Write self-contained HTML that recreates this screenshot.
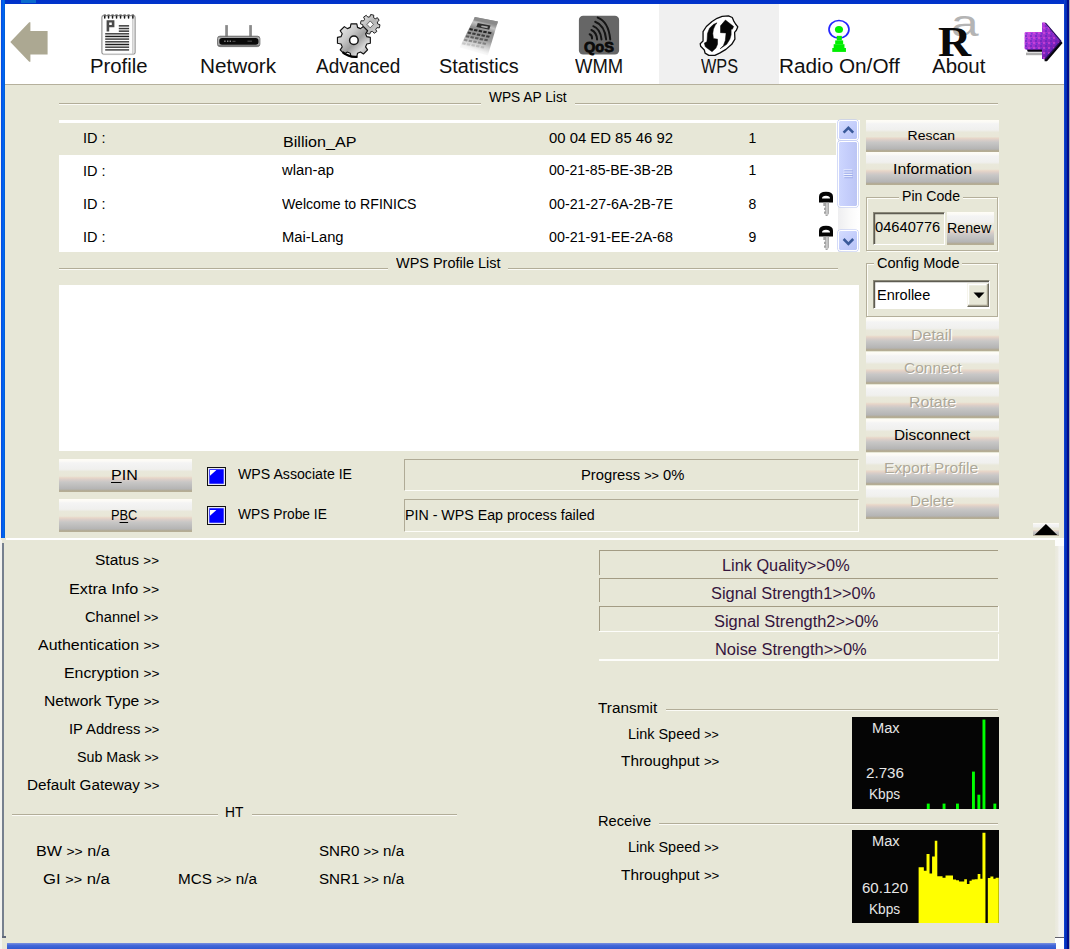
<!DOCTYPE html>
<html lang="en"><head><meta charset="utf-8"><title>WPS</title><style>
html,body{margin:0;padding:0}
body{width:1070px;height:949px;position:relative;overflow:hidden;background:#e7e7d7;font-family:"Liberation Sans",Arial,sans-serif;}
#r>div,#r>svg,.t{position:absolute}
.t{white-space:pre;color:#000;transform-origin:0 50%}
.g{font-size:.86em}
u{text-decoration-thickness:1px;text-underline-offset:1.5px}
</style></head>
<body><div id="r">
<div style="left:5px;top:4px;width:1059px;height:79.5px;background:#fff;"></div>
<div style="left:659px;top:4px;width:120px;height:79.5px;background:#f0f0f0;"></div>
<div style="left:5px;top:83.5px;width:1059px;height:1.2px;background:#b5b09c;"></div>
<div style="left:0px;top:0px;width:1070px;height:4px;background:linear-gradient(#0030c8,#0034cc);"></div>
<div style="left:21px;top:0px;width:15px;height:2.5px;background:#0a6acc;"></div>
<div style="left:0px;top:0px;width:1px;height:949px;background:#f4f4f0;"></div>
<div style="left:1px;top:0px;width:4.3px;height:538px;background:linear-gradient(90deg,#0848dc,#0060ee 45%,#0066f0 62%,#005cd0);"></div>
<div style="left:1063.7px;top:0px;width:3px;height:949px;background:linear-gradient(90deg,#1848d0,#0434c4 40%,#0230b0);"></div>
<div style="left:1066.5px;top:0px;width:2.2px;height:949px;background:#020c8c;"></div>
<div style="left:1068.6px;top:0px;width:1.4px;height:949px;background:#a6a6aa;"></div>
<div style="left:6px;top:538px;width:1058px;height:1.6px;background:#fff;"></div>
<div style="left:1055px;top:540px;width:8.7px;height:404px;background:linear-gradient(90deg,#e9e9dc,#ecebe2 30%,#f3f3f1 45%,#f2f2f2);"></div>
<div style="left:1055px;top:539px;width:8.7px;height:7px;background:#fdfdfc;"></div>
<div style="left:1055px;top:936.6px;width:8.6px;height:1.2px;background:#60606a;"></div>
<div style="left:1055px;top:937.8px;width:8.6px;height:11.2px;background:#fff;"></div>
<div style="left:0px;top:539.6px;width:2.3px;height:410px;background:#f3f3ef;"></div>
<div style="left:2.3px;top:543px;width:1.7px;height:394px;background:#76808e;"></div>
<div style="left:2.3px;top:936.4px;width:4px;height:1.3px;background:#60687a;"></div>
<div style="left:6.5px;top:943.4px;width:1049px;height:5.6px;background:linear-gradient(#7a90e0,#4468d8 40%,#3058d0);"></div>
<div style="left:58.5px;top:102.8px;width:422.5px;height:1.1px;background:#b2ad98;"></div>
<div style="left:58.5px;top:103.9px;width:422.5px;height:1px;background:#fbfbf6;"></div>
<div style="left:575px;top:102.8px;width:423px;height:1.1px;background:#b2ad98;"></div>
<div style="left:575px;top:103.9px;width:423px;height:1px;background:#fbfbf6;"></div>
<div style="left:58.5px;top:267.6px;width:329.5px;height:1.1px;background:#b2ad98;"></div>
<div style="left:58.5px;top:268.7px;width:329.5px;height:1px;background:#fbfbf6;"></div>
<div style="left:508px;top:267.6px;width:330px;height:1.1px;background:#b2ad98;"></div>
<div style="left:508px;top:268.7px;width:330px;height:1px;background:#fbfbf6;"></div>
<div style="left:12px;top:813.6px;width:206.3px;height:1.1px;background:#b2ad98;"></div>
<div style="left:12px;top:814.7px;width:206.3px;height:1px;background:#fbfbf6;"></div>
<div style="left:252.3px;top:813.6px;width:205.2px;height:1.1px;background:#b2ad98;"></div>
<div style="left:252.3px;top:814.7px;width:205.2px;height:1px;background:#fbfbf6;"></div>
<div style="left:665.5px;top:709.3px;width:332.5px;height:1.1px;background:#b2ad98;"></div>
<div style="left:665.5px;top:710.4px;width:332.5px;height:1px;background:#fbfbf6;"></div>
<div style="left:659px;top:823.2px;width:339px;height:1.1px;background:#b2ad98;"></div>
<div style="left:659px;top:824.3px;width:339px;height:1px;background:#fbfbf6;"></div>
<div style="left:58.5px;top:119.8px;width:801px;height:132px;background:#fff;"></div>
<div style="left:58.5px;top:122.6px;width:777.5px;height:32px;background:#e7e7d7;"></div>
<div style="left:838px;top:120px;width:21px;height:131.8px;background:linear-gradient(90deg,#eeeef0,#fafafa 60%,#fff);"></div>
<div style="left:838.3px;top:120.3px;width:20px;height:19.8px;background:linear-gradient(135deg,#d4dcff,#c2ccfb 60%,#b8c4f6);border:1px solid #fff;border-radius:2.5px;box-sizing:border-box;box-shadow:0 0 0 .6px #b8c4f4;"></div>
<div style="left:838.3px;top:141.4px;width:20px;height:65.2px;background:linear-gradient(90deg,#cdd6fe,#c4cdfb 50%,#bcc6f4);border:1px solid #fff;border-radius:2.5px;box-sizing:border-box;box-shadow:0 0 0 .6px #b8c4f4;"></div>
<div style="left:838.3px;top:230.4px;width:20px;height:21px;background:linear-gradient(135deg,#d4dcff,#c2ccfb 60%,#b8c4f6);border:1px solid #fff;border-radius:2.5px;box-sizing:border-box;box-shadow:0 0 0 .6px #b8c4f4;"></div>
<div style="left:58.5px;top:285px;width:800.5px;height:166.3px;background:#fff;"></div>
<div style="left:866px;top:120.1px;width:133px;height:32px;background:linear-gradient(#fffdf6 0%,#fbfaf6 7%,#f4f4f4 12%,#f0f0ee 31%,#e9e8da 38%,#e9e7d8 52%,#e8d6c8 57%,#d8cdc8 63%,#c8c7c6 70%,#b4b4b4 91%,#b2ab98 95%,#b6ae92 100%);"></div>
<div style="left:866px;top:152.3px;width:133px;height:32.7px;background:linear-gradient(#fffdf6 0%,#fbfaf6 7%,#f4f4f4 12%,#f0f0ee 31%,#e9e8da 38%,#e9e7d8 52%,#e8d6c8 57%,#d8cdc8 63%,#c8c7c6 70%,#b4b4b4 91%,#b2ab98 95%,#b6ae92 100%);"></div>
<div style="left:866px;top:318.2px;width:133px;height:32.6px;background:linear-gradient(#fffdf6 0%,#fbfaf6 7%,#f4f4f4 12%,#f0f0ee 31%,#e9e8da 38%,#e9e7d8 52%,#e8d6c8 57%,#d8cdc8 63%,#c8c7c6 70%,#b4b4b4 91%,#b2ab98 95%,#b6ae92 100%);"></div>
<div style="left:866px;top:351.78px;width:133px;height:32.6px;background:linear-gradient(#fffdf6 0%,#fbfaf6 7%,#f4f4f4 12%,#f0f0ee 31%,#e9e8da 38%,#e9e7d8 52%,#e8d6c8 57%,#d8cdc8 63%,#c8c7c6 70%,#b4b4b4 91%,#b2ab98 95%,#b6ae92 100%);"></div>
<div style="left:866px;top:385.36px;width:133px;height:32.6px;background:linear-gradient(#fffdf6 0%,#fbfaf6 7%,#f4f4f4 12%,#f0f0ee 31%,#e9e8da 38%,#e9e7d8 52%,#e8d6c8 57%,#d8cdc8 63%,#c8c7c6 70%,#b4b4b4 91%,#b2ab98 95%,#b6ae92 100%);"></div>
<div style="left:866px;top:418.94px;width:133px;height:32.6px;background:linear-gradient(#fffdf6 0%,#fbfaf6 7%,#f4f4f4 12%,#f0f0ee 31%,#e9e8da 38%,#e9e7d8 52%,#e8d6c8 57%,#d8cdc8 63%,#c8c7c6 70%,#b4b4b4 91%,#b2ab98 95%,#b6ae92 100%);"></div>
<div style="left:866px;top:452.52px;width:133px;height:32.6px;background:linear-gradient(#fffdf6 0%,#fbfaf6 7%,#f4f4f4 12%,#f0f0ee 31%,#e9e8da 38%,#e9e7d8 52%,#e8d6c8 57%,#d8cdc8 63%,#c8c7c6 70%,#b4b4b4 91%,#b2ab98 95%,#b6ae92 100%);"></div>
<div style="left:866px;top:486.1px;width:133px;height:32.6px;background:linear-gradient(#fffdf6 0%,#fbfaf6 7%,#f4f4f4 12%,#f0f0ee 31%,#e9e8da 38%,#e9e7d8 52%,#e8d6c8 57%,#d8cdc8 63%,#c8c7c6 70%,#b4b4b4 91%,#b2ab98 95%,#b6ae92 100%);"></div>
<div style="left:947px;top:212px;width:47px;height:33px;background:linear-gradient(#fffdf6 0%,#fbfaf6 7%,#f4f4f4 12%,#f0f0ee 31%,#e9e8da 38%,#e9e7d8 52%,#e8d6c8 57%,#d8cdc8 63%,#c8c7c6 70%,#b4b4b4 91%,#b2ab98 95%,#b6ae92 100%);"></div>
<div style="left:58.8px;top:458.8px;width:132.8px;height:32.8px;background:linear-gradient(#fffdf6 0%,#fbfaf6 7%,#f4f4f4 12%,#f0f0ee 31%,#e9e8da 38%,#e9e7d8 52%,#e8d6c8 57%,#d8cdc8 63%,#c8c7c6 70%,#b4b4b4 91%,#b2ab98 95%,#b6ae92 100%);"></div>
<div style="left:58.8px;top:499.3px;width:132.8px;height:32.6px;background:linear-gradient(#fffdf6 0%,#fbfaf6 7%,#f4f4f4 12%,#f0f0ee 31%,#e9e8da 38%,#e9e7d8 52%,#e8d6c8 57%,#d8cdc8 63%,#c8c7c6 70%,#b4b4b4 91%,#b2ab98 95%,#b6ae92 100%);"></div>
<div style="left:1032.7px;top:523.2px;width:26.3px;height:12.6px;background:linear-gradient(#fffdf6 0%,#fbfaf6 7%,#f4f4f4 12%,#f0f0ee 31%,#e9e8da 38%,#e9e7d8 52%,#e8d6c8 57%,#d8cdc8 63%,#c8c7c6 70%,#b4b4b4 91%,#b2ab98 95%,#b6ae92 100%);"></div>
<div style="left:866px;top:196.8px;width:132px;height:54px;border:1px solid #b4af9a;box-shadow:1px 1px 0 #fdfdf8, inset 1px 1px 0 #fdfdf8;box-sizing:border-box"></div>
<div style="left:899px;top:195.8px;width:64px;height:4px;background:#e7e7d7;"></div>
<div style="left:866px;top:263.2px;width:132px;height:53.4px;border:1px solid #b4af9a;box-shadow:1px 1px 0 #fdfdf8, inset 1px 1px 0 #fdfdf8;box-sizing:border-box"></div>
<div style="left:873.5px;top:262.2px;width:88.5px;height:4px;background:#e7e7d7;"></div>
<div style="left:872.7px;top:212.2px;width:72.6px;height:33px;background:#e7e7d7;box-sizing:border-box;border-style:solid;border-width:1.3px;border-color:#8a8878 #fff #fff #8a8878;box-shadow:inset 1.2px 1.2px 0 #5e5c52"></div>
<div style="left:873.2px;top:280.3px;width:117px;height:28.6px;background:#fff;box-sizing:border-box;border-style:solid;border-width:1.3px;border-color:#8a8878 #fff #fff #8a8878;box-shadow:inset 1.2px 1.2px 0 #5e5c52"></div>
<div style="left:967.2px;top:282.5px;width:21.6px;height:24.4px;background:#e7e7d7;box-sizing:border-box;border-style:solid;border-width:1.2px;border-color:#f6f5ec #6e6c60 #6e6c60 #f6f5ec;box-shadow:inset -1.2px -1.2px 0 #a6a290, inset 1.2px 1.2px 0 #fff"></div>
<svg style="left:972.6px;top:291.6px" width="12" height="7" viewBox="0 0 12 7"><path d="M0.5 0.5h11l-5.5 5.8z" fill="#000"/></svg>
<div style="left:404.3px;top:459px;width:455px;height:32px;box-sizing:border-box;border-style:solid;border-width:1.3px;border-color:#b0ab96 #fdfdf8 #fdfdf8 #b0ab96"></div>
<div style="left:404.3px;top:499px;width:455px;height:33px;box-sizing:border-box;border-style:solid;border-width:1.3px;border-color:#b0ab96 #fdfdf8 #fdfdf8 #b0ab96"></div>
<div style="left:206.5px;top:466.6px;width:19px;height:19px;box-sizing:border-box;border:1.3px solid #111;background:#0000fe;box-shadow:inset 0 0 0 1.3px #e8e8f4"></div>
<svg style="left:209.9px;top:470px" width="9" height="9" viewBox="0 0 9 9"><path d="M0 0h6.4L0 5.8z" fill="#fff"/></svg>
<div style="left:206.5px;top:506.4px;width:19px;height:19px;box-sizing:border-box;border:1.3px solid #111;background:#0000fe;box-shadow:inset 0 0 0 1.3px #e8e8f4"></div>
<svg style="left:209.9px;top:509.8px" width="9" height="9" viewBox="0 0 9 9"><path d="M0 0h6.4L0 5.8z" fill="#fff"/></svg>
<div style="left:599.2px;top:550px;width:398.8px;height:1.3px;background:#a39c84;"></div>
<div style="left:599.2px;top:550px;width:1.3px;height:24.6px;background:#a39c84;"></div>
<div style="left:599.2px;top:578px;width:398.8px;height:1.3px;background:#a39c84;"></div>
<div style="left:599.2px;top:578px;width:1.3px;height:24.2px;background:#a39c84;"></div>
<div style="left:599.2px;top:605.8px;width:398.8px;height:1.3px;background:#a39c84;"></div>
<div style="left:599.2px;top:605.8px;width:1.3px;height:25px;background:#a39c84;"></div>
<div style="left:599.2px;top:630.8px;width:400px;height:1.5px;background:#fdfdfa;"></div>
<div style="left:998px;top:605.8px;width:1.3px;height:25px;background:#fdfdfa;"></div>
<div style="left:599.2px;top:659px;width:400px;height:1.5px;background:#fdfdfa;"></div>
<div style="left:998px;top:634px;width:1.3px;height:25px;background:#fdfdfa;"></div>
<div style="left:852.4px;top:716.6px;width:146.8px;height:92px;background:#050505;"></div>
<div style="left:852.4px;top:830.2px;width:146.8px;height:93.2px;background:#050505;"></div>
<svg style="left:852.4px;top:716.6px" width="146.8" height="92" viewBox="852.4 716.6 146.8 92"><rect x="927.2" y="803.2" width="2.9" height="5.4" fill="#00ff00"/><rect x="943.0" y="803.2" width="2.9" height="5.4" fill="#00ff00"/><rect x="956.4" y="803.2" width="2.9" height="5.4" fill="#00ff00"/><rect x="972.4" y="771.2" width="2.9" height="37.4" fill="#00ff00"/><rect x="977.8" y="794.3" width="2.9" height="14.3" fill="#00ff00"/><rect x="982.9" y="719.2" width="2.9" height="89.4" fill="#00ff00"/><rect x="993.8" y="803.2" width="2.9" height="5.4" fill="#00ff00"/></svg>
<svg style="left:852.4px;top:830.2px" width="146.8" height="93.2" viewBox="852.4 830.2 146.8 93.2"><path d="M919.02 923.4 L919.02 867.55 L924.25 867.55 L924.25 870.84 L926.94 870.84 L926.94 854.09 L929.93 854.09 L929.93 873.83 L932.48 873.83 L932.48 856.64 L935.17 856.64 L935.17 840.93 L937.71 840.93 L937.71 876.52 L942.94 876.52 L942.94 878.02 L945.93 878.02 L945.93 875.63 L953.41 875.63 L953.41 879.81 L956.40 879.81 L956.40 880.56 L959.39 880.56 L959.39 881.61 L964.63 881.61 L964.63 879.51 L967.32 879.51 L967.32 884.30 L969.86 884.30 L969.86 881.01 L972.10 881.01 L972.10 879.81 L975.09 879.81 L975.09 879.51 L978.08 879.51 L978.08 874.13 L980.78 874.13 L980.78 879.07 L982.87 879.07 L982.87 833.01 L985.86 833.01 L985.86 923.4Z" fill="#ffff00"/><path d="M988.25 923.4 L988.25 878.32 L990.79 878.32 L990.79 876.82 L993.79 876.82 L993.79 879.07 L996.03 879.07 L996.03 878.02 L999.17 878.02 L999.17 923.4Z" fill="#ffff00"/></svg>
<svg style="left:8px;top:20px" width="42" height="44" viewBox="8 20 42 44" ><path d="M10.3 42 L29.2 22.3 L30.4 22.3 L30.4 31 L47.6 31 L47.6 54.4 L30.4 54.4 L30.4 61.8 L29.2 61.8 Z" fill="#aca892"/></svg>
<svg style="left:100px;top:13px" width="38" height="43" viewBox="100 13 38 43" ><rect x="101.9" y="15.6" width="33.2" height="38.6" rx="1.6" fill="#fdfdfd" stroke="#8c8c8c" stroke-width="1.1"/><line x1="132.9" y1="16.5" x2="132.9" y2="53.8" stroke="#b4b4b4" stroke-width="1"/><line x1="103" y1="54.6" x2="134" y2="54.6" stroke="#c8c8c8" stroke-width="0.8"/><rect x="104.0" y="14.6" width="1.5" height="4.1" rx="0.7" fill="#1a1a1a"/><rect x="103.4" y="14" width="2.6" height="1.6" rx="0.8" fill="#9a9a9a"/><rect x="107.8" y="14.6" width="1.5" height="4.1" rx="0.7" fill="#1a1a1a"/><rect x="107.3" y="14" width="2.6" height="1.6" rx="0.8" fill="#9a9a9a"/><rect x="111.8" y="14.6" width="1.5" height="4.1" rx="0.7" fill="#1a1a1a"/><rect x="111.3" y="14" width="2.6" height="1.6" rx="0.8" fill="#9a9a9a"/><rect x="115.8" y="14.6" width="1.5" height="4.1" rx="0.7" fill="#1a1a1a"/><rect x="115.2" y="14" width="2.6" height="1.6" rx="0.8" fill="#9a9a9a"/><rect x="119.8" y="14.6" width="1.5" height="4.1" rx="0.7" fill="#1a1a1a"/><rect x="119.2" y="14" width="2.6" height="1.6" rx="0.8" fill="#9a9a9a"/><rect x="123.8" y="14.6" width="1.5" height="4.1" rx="0.7" fill="#1a1a1a"/><rect x="123.3" y="14" width="2.6" height="1.6" rx="0.8" fill="#9a9a9a"/><rect x="127.8" y="14.6" width="1.5" height="4.1" rx="0.7" fill="#1a1a1a"/><rect x="127.3" y="14" width="2.6" height="1.6" rx="0.8" fill="#9a9a9a"/><rect x="132.1" y="14.6" width="1.5" height="4.1" rx="0.7" fill="#1a1a1a"/><rect x="131.5" y="14" width="2.6" height="1.6" rx="0.8" fill="#9a9a9a"/><path d="M106.6 20.2 h7.8 v7 h-5.2 v4.3 h-2.6 Z M109.2 22.6 v2.4 h2.6 v-2.4 Z" fill="#4a4a4a" fill-rule="evenodd"/><rect x="118.8" y="25.1" width="10.3" height="1.5" fill="#3a3a3a"/><rect x="118.8" y="27.8" width="10.3" height="1.5" fill="#3a3a3a"/><rect x="118.8" y="30.4" width="10.3" height="1.5" fill="#3a3a3a"/><rect x="105.2" y="33.05" width="23.9" height="1.5" fill="#444"/><rect x="105.2" y="35.70" width="23.9" height="1.5" fill="#1c1c1c"/><rect x="105.2" y="38.35" width="23.9" height="1.5" fill="#444"/><rect x="105.2" y="41.05" width="23.9" height="1.5" fill="#444"/><rect x="105.2" y="43.75" width="23.9" height="1.5" fill="#1c1c1c"/><rect x="105.2" y="46.45" width="23.9" height="1.5" fill="#444"/><rect x="105.2" y="49.15" width="23.9" height="1.5" fill="#444"/></svg>
<svg style="left:215px;top:23px" width="48" height="26" viewBox="215 23 48 26" ><defs><linearGradient id="nb" x1="0" y1="0" x2="0" y2="1"><stop offset="0" stop-color="#5e5e5e"/><stop offset=".16" stop-color="#b8b8b8"/><stop offset=".8" stop-color="#a6a6a6"/><stop offset="1" stop-color="#4a4a4a"/></linearGradient></defs><rect x="225.2" y="25.1" width="2.7" height="12" fill="#8a8a8a"/><rect x="249.2" y="25.1" width="2.7" height="12" fill="#8a8a8a"/><rect x="217.5" y="36.2" width="42.4" height="10.4" rx="2.4" fill="url(#nb)" stroke="#707070" stroke-width="0.9"/><rect x="219.3" y="38" width="39.2" height="6.8" rx="2.8" fill="#0a0a0a"/><rect x="224.2" y="40.5" width="1.4" height="1.5" fill="#8a8a8a"/><rect x="227.0" y="40.5" width="1.4" height="1.5" fill="#8a8a8a"/><rect x="229.6" y="40.5" width="1.4" height="1.5" fill="#8a8a8a"/><rect x="232.5" y="40.8" width="3" height="1" fill="#555"/><rect x="247.5" y="40.6" width="4.5" height="1.2" fill="#4a4a4a"/></svg>
<svg style="left:335px;top:12px" width="48" height="48" viewBox="335 12 48 48" ><defs><linearGradient id="gg" x1="0" y1="0" x2="1" y2="1"><stop offset="0" stop-color="#f4f4f4"/><stop offset=".35" stop-color="#c9c9c9"/><stop offset=".55" stop-color="#9e9e9e"/><stop offset=".75" stop-color="#d8d8d8"/><stop offset="1" stop-color="#8a8a8a"/></linearGradient><linearGradient id="gs" x1="0" y1="0" x2="1" y2="1"><stop offset="0" stop-color="#efefef"/><stop offset=".5" stop-color="#b4b4b4"/><stop offset="1" stop-color="#dadada"/></linearGradient></defs><path d="M377.69 23.96 L379.99 24.75 L379.33 27.87 L376.90 27.66 L375.74 29.35 L376.80 31.54 L374.13 33.28 L372.56 31.42 L370.54 31.79 L369.75 34.09 L366.63 33.43 L366.84 31.00 L365.15 29.84 L362.96 30.90 L361.22 28.23 L363.08 26.66 L362.71 24.64 L360.41 23.85 L361.07 20.73 L363.50 20.94 L364.66 19.25 L363.60 17.06 L366.27 15.32 L367.84 17.18 L369.86 16.81 L370.65 14.51 L373.77 15.17 L373.56 17.60 L375.25 18.76 L377.44 17.70 L379.18 20.37 L377.32 21.94Z" fill="url(#gs)" stroke="#222" stroke-width="1" stroke-linejoin="round"/><path d="M370.2 20.9 L373.4 24.4 L370.2 27.9 L367 24.4Z" fill="#fff" stroke="#333" stroke-width="0.7"/><path d="M350.26 27.40 L350.98 23.86 L356.82 23.86 L357.54 27.40 L360.45 28.61 L363.46 26.61 L367.59 30.74 L365.59 33.75 L366.80 36.66 L370.34 37.38 L370.34 43.22 L366.80 43.94 L365.59 46.85 L367.59 49.86 L363.46 53.99 L360.45 51.99 L357.54 53.20 L356.82 56.74 L350.98 56.74 L350.26 53.20 L347.35 51.99 L344.34 53.99 L340.21 49.86 L342.21 46.85 L341.00 43.94 L337.46 43.22 L337.46 37.38 L341.00 36.66 L342.21 33.75 L340.21 30.74 L344.34 26.61 L347.35 28.61Z" fill="url(#gg)" stroke="#111" stroke-width="1.15" stroke-linejoin="round"/><path d="M342.6 52.2 Q349 57.6 357.5 56.8" fill="none" stroke="#000" stroke-width="2.2"/><circle cx="353.9" cy="40.3" r="4.3" fill="#fff" stroke="#161616" stroke-width="1.5"/></svg>
<svg style="left:458px;top:14px" width="44" height="44" viewBox="458 14 44 44" ><defs><linearGradient id="cg" gradientUnits="userSpaceOnUse" x1="486" y1="18" x2="474" y2="54"><stop offset="0" stop-color="#8c8c8c"/><stop offset=".12" stop-color="#969696"/><stop offset=".2" stop-color="#c2c2c2"/><stop offset=".34" stop-color="#8c8c8c"/><stop offset=".56" stop-color="#9c9c9c"/><stop offset=".74" stop-color="#d2d2d2"/><stop offset=".88" stop-color="#f4f4f4"/><stop offset="1" stop-color="#ffffff"/></linearGradient><linearGradient id="cf" gradientUnits="userSpaceOnUse" x1="484" y1="30" x2="474" y2="55"><stop offset="0" stop-color="#2c2c2c"/><stop offset=".6" stop-color="#4a4a4a"/><stop offset="1" stop-color="#d8d8d8"/></linearGradient></defs><path d="M474.8 17.1 L497.9 21.6 L487.8 55.6 L459.5 47.5 Z" fill="url(#cg)"/><path d="M474.8 17.1 L497.9 21.6 L496.9 25.1 L473.9 20.2 Z" fill="#8a8a8a"/><path d="M477.7 23.0 L490.5 25.5 L489.2 29.8 L476.4 27.1 Z" fill="#2e2e2e"/><path d="M481.6 25.4 L487.9 26.6 L487.4 28.3 L481.1 27.0 Z" fill="#a8a8a8"/><path d="M469.8 28.1 l3.3 0.62 l-0.62 2 l-3.3 -0.62Z" fill="#242424" opacity="1.00"/><path d="M474.4 28.9 l3.3 0.62 l-0.62 2 l-3.3 -0.62Z" fill="#242424" opacity="1.00"/><path d="M479.0 29.8 l3.3 0.62 l-0.62 2 l-3.3 -0.62Z" fill="#242424" opacity="1.00"/><path d="M483.6 30.7 l3.3 0.62 l-0.62 2 l-3.3 -0.62Z" fill="#242424" opacity="1.00"/><path d="M488.3 31.6 l3.3 0.62 l-0.62 2 l-3.3 -0.62Z" fill="#242424" opacity="1.00"/><path d="M468.0 31.6 l3.3 0.62 l-0.62 2 l-3.3 -0.62Z" fill="#242424" opacity="0.79"/><path d="M472.6 32.5 l3.3 0.62 l-0.62 2 l-3.3 -0.62Z" fill="#242424" opacity="0.79"/><path d="M477.2 33.4 l3.3 0.62 l-0.62 2 l-3.3 -0.62Z" fill="#242424" opacity="0.79"/><path d="M481.8 34.3 l3.3 0.62 l-0.62 2 l-3.3 -0.62Z" fill="#242424" opacity="0.79"/><path d="M486.5 35.2 l3.3 0.62 l-0.62 2 l-3.3 -0.62Z" fill="#242424" opacity="0.79"/><path d="M466.2 35.2 l3.3 0.62 l-0.62 2 l-3.3 -0.62Z" fill="#242424" opacity="0.58"/><path d="M470.8 36.1 l3.3 0.62 l-0.62 2 l-3.3 -0.62Z" fill="#242424" opacity="0.58"/><path d="M475.4 37.0 l3.3 0.62 l-0.62 2 l-3.3 -0.62Z" fill="#242424" opacity="0.58"/><path d="M480.0 37.9 l3.3 0.62 l-0.62 2 l-3.3 -0.62Z" fill="#242424" opacity="0.58"/><path d="M484.7 38.7 l3.3 0.62 l-0.62 2 l-3.3 -0.62Z" fill="#242424" opacity="0.58"/><path d="M464.4 38.8 l3.3 0.62 l-0.62 2 l-3.3 -0.62Z" fill="#242424" opacity="0.37"/><path d="M469.0 39.7 l3.3 0.62 l-0.62 2 l-3.3 -0.62Z" fill="#242424" opacity="0.37"/><path d="M473.6 40.5 l3.3 0.62 l-0.62 2 l-3.3 -0.62Z" fill="#242424" opacity="0.37"/><path d="M478.2 41.4 l3.3 0.62 l-0.62 2 l-3.3 -0.62Z" fill="#242424" opacity="0.37"/><path d="M482.9 42.3 l3.3 0.62 l-0.62 2 l-3.3 -0.62Z" fill="#242424" opacity="0.37"/><path d="M462.6 42.3 l3.3 0.62 l-0.62 2 l-3.3 -0.62Z" fill="#242424" opacity="0.16"/><path d="M467.2 43.2 l3.3 0.62 l-0.62 2 l-3.3 -0.62Z" fill="#242424" opacity="0.16"/><path d="M471.8 44.1 l3.3 0.62 l-0.62 2 l-3.3 -0.62Z" fill="#242424" opacity="0.16"/><path d="M476.4 45.0 l3.3 0.62 l-0.62 2 l-3.3 -0.62Z" fill="#242424" opacity="0.16"/><path d="M481.1 45.9 l3.3 0.62 l-0.62 2 l-3.3 -0.62Z" fill="#242424" opacity="0.16"/></svg>
<svg style="left:578px;top:15px" width="42" height="41" viewBox="578 15 42 41" ><rect x="578.9" y="15.8" width="40.2" height="38.8" rx="4.2" fill="#666"/><path d="M597.72 17.64 Q608.46 21.56 610.23 39.46" fill="none" stroke="#141414" stroke-width="2" stroke-linecap="round"/><path d="M595.19 21.75 Q604.67 25.23 606.12 39.46" fill="none" stroke="#141414" stroke-width="2" stroke-linecap="round"/><path d="M593.29 26.18 Q600.56 29.03 601.51 39.46" fill="none" stroke="#141414" stroke-width="2" stroke-linecap="round"/><path d="M591.39 29.97 Q596.58 32.19 597.08 39.46" fill="none" stroke="#141414" stroke-width="2" stroke-linecap="round"/><path d="M589.62 34.21 Q592.34 35.35 592.03 38.51" fill="none" stroke="#141414" stroke-width="2" stroke-linecap="round"/><text x="598.9" y="52.3" text-anchor="middle" font-family="Liberation Sans,Arial,sans-serif" font-weight="bold" font-size="14.6" fill="#0a0a0a" stroke="#0a0a0a" stroke-width="0.8" textLength="30" lengthAdjust="spacingAndGlyphs">QoS</text></svg>
<svg style="left:698px;top:13px" width="42" height="46" viewBox="698 13 42 46" ><polygon points="722.14,16.38 728.46,15.87 732.26,17.52 733.65,20.81 735.54,23.97 737.82,26.81 736.37,30.29 734.60,32.31 734.91,39.14 731.75,44.33 725.93,49.38 719.61,53.18 714.87,55.39 708.86,55.39 705.07,53.18 704.31,50.02 700.64,46.22 700.20,43.69 703.05,41.04 703.05,31.55 706.34,26.50 712.03,21.44 717.08,18.28" fill="#fff" stroke="#0c0c0c" stroke-width="1.3" stroke-linejoin="round"/><polygon points="716.96,22.83 713.29,24.47 709.50,28.27 707.47,33.45 707.16,39.14 706.84,41.80 704.31,43.06 705.32,46.85 712.03,51.66 715.95,48.12 717.53,44.33 717.53,39.14 713.42,38.51 712.78,33.45 713.42,29.15 715.19,25.36" fill="#060606" stroke="#060606" stroke-width="0.5" stroke-linejoin="round"/><polygon points="725.43,20.05 733.65,26.50 732.38,29.15 731.12,29.15 731.12,34.84 729.85,39.27 726.69,44.33 720.12,48.75 723.41,45.59 725.30,40.53 726.06,32.95 720.50,32.63 720.50,25.86" fill="#060606" stroke="#060606" stroke-width="0.5" stroke-linejoin="round"/></svg>
<svg style="left:826px;top:17px" width="26" height="37" viewBox="826 17 26 37" ><ellipse cx="838.98" cy="29.34" rx="9.99" ry="8.85" fill="none" stroke="#2626ff" stroke-width="1.7"/><ellipse cx="838.98" cy="29.53" rx="4.05" ry="3.54" fill="#00ee00"/><rect x="836.77" y="35.85" width="5.06" height="4.68" fill="#00ee00"/><rect x="835.19" y="40.41" width="7.97" height="3.92" fill="#00ee00"/><rect x="833.67" y="44.20" width="10.81" height="3.92" fill="#00ee00"/><rect x="832.28" y="47.99" width="13.66" height="3.92" fill="#00ee00"/></svg>
<span class="t" style="left:950.6px;top:3.6px;font-size:37px;line-height:40px;color:#b4b4b4;transform:scaleX(1.34);transform-origin:0 0">a</span><span class="t" style="left:938.3px;top:18.1px;font-family:'Liberation Serif',serif;font-weight:bold;font-size:42.5px;line-height:48px;color:#0a0a0a;transform:scaleX(1.08);transform-origin:0 0">R</span>
<svg style="left:1022px;top:20px" width="43" height="44" viewBox="1022 20 43 44" ><defs><linearGradient id="pa" x1="0" y1="0" x2="1" y2="1"><stop offset="0" stop-color="#dc5cf0"/><stop offset=".35" stop-color="#a836d6"/><stop offset=".7" stop-color="#8222bc"/><stop offset="1" stop-color="#3c0e70"/></linearGradient><pattern id="pn" width="5" height="5" patternUnits="userSpaceOnUse"><rect x="0" y="0" width="2" height="2" fill="#5a20b8" opacity=".55"/><rect x="3" y="2" width="2" height="2" fill="#e850e0" opacity=".5"/><rect x="1" y="3" width="1.5" height="1.5" fill="#3a30d0" opacity=".5"/></pattern></defs><path d="M1026 52.6 h16.5 v2.6 h-16.5z" fill="#8a8a8a" opacity=".7"/><path d="M1024.6 33.4 Q1024.6 32 1026 32 L1042 32 L1042 22.6 L1044.4 22.6 L1060 40.9 L1044.4 59 L1042 59 L1042 49.6 L1026 49.6 Q1024.6 49.6 1024.6 48Z" fill="#07050c" transform="translate(2.6,2.2)"/><path d="M1024.6 33.4 Q1024.6 32 1026 32 L1042 32 L1042 22.6 L1044.4 22.6 L1060 40.9 L1044.4 59 L1042 59 L1042 49.6 L1026 49.6 Q1024.6 49.6 1024.6 48Z" fill="#2a1060" transform="translate(1.6,0.2)"/><path d="M1024.6 33.4 Q1024.6 32 1026 32 L1042 32 L1042 22.6 L1044.4 22.6 L1060 40.9 L1044.4 59 L1042 59 L1042 49.6 L1026 49.6 Q1024.6 49.6 1024.6 48Z" fill="url(#pa)"/><path d="M1024.6 33.4 Q1024.6 32 1026 32 L1042 32 L1042 22.6 L1044.4 22.6 L1060 40.9 L1044.4 59 L1042 59 L1042 49.6 L1026 49.6 Q1024.6 49.6 1024.6 48Z" fill="url(#pn)"/></svg>
<svg style="left:818px;top:190.9px" width="16" height="26" viewBox="0 0 16 26"><path d="M1 11.4 L1 5.5 Q1 0.8 8 0.8 Q15 0.8 15 5.5 L15 11.4 Z" fill="#050505"/><path d="M4 7.5 Q4 4.7 8 4.7 Q12 4.7 12 7.5 Z" fill="#fff"/><path d="M5.3 11.4 L10.9 11.4 L10.9 22.5 L9.3 25 L7.6 25 L7.6 22.8 L6 22.8 L6 20.6 L7.2 20.6 L7.2 19 L6 19 L6 16.8 L7.2 16.8 L7.2 15 L5.3 15Z" fill="#a4a4a4"/><rect x="8.4" y="12" width="1.1" height="12" fill="#e2e2e2"/></svg>
<svg style="left:818px;top:224.5px" width="16" height="26" viewBox="0 0 16 26"><path d="M1 11.4 L1 5.5 Q1 0.8 8 0.8 Q15 0.8 15 5.5 L15 11.4 Z" fill="#050505"/><path d="M4 7.5 Q4 4.7 8 4.7 Q12 4.7 12 7.5 Z" fill="#fff"/><path d="M5.3 11.4 L10.9 11.4 L10.9 22.5 L9.3 25 L7.6 25 L7.6 22.8 L6 22.8 L6 20.6 L7.2 20.6 L7.2 19 L6 19 L6 16.8 L7.2 16.8 L7.2 15 L5.3 15Z" fill="#a4a4a4"/><rect x="8.4" y="12" width="1.1" height="12" fill="#e2e2e2"/></svg>
<svg style="left:842px;top:125px" width="13" height="11" viewBox="0 0 13 11"><path d="M1.6 7.6 L6.4 2.8 L11.2 7.6" fill="none" stroke="#3a5a9a" stroke-width="2.6" stroke-linejoin="miter"/></svg><svg style="left:842px;top:235.5px" width="13" height="11" viewBox="0 0 13 11"><path d="M1.6 3 L6.4 7.8 L11.2 3" fill="none" stroke="#3a5a9a" stroke-width="2.6" stroke-linejoin="miter"/></svg><svg style="left:843.2px;top:168.5px" width="11" height="10" viewBox="0 0 11 10"><rect x="0.5" y="0.4" width="8.6" height="1" fill="#eef2ff"/><rect x="1.3" y="1.4" width="8.6" height="0.9" fill="#9aaae8"/><rect x="0.5" y="2.7" width="8.6" height="1" fill="#eef2ff"/><rect x="1.3" y="3.7" width="8.6" height="0.9" fill="#9aaae8"/><rect x="0.5" y="5.0" width="8.6" height="1" fill="#eef2ff"/><rect x="1.3" y="6.0" width="8.6" height="0.9" fill="#9aaae8"/><rect x="0.5" y="7.3" width="8.6" height="1" fill="#eef2ff"/><rect x="1.3" y="8.3" width="8.6" height="0.9" fill="#9aaae8"/></svg>
<svg style="left:1033px;top:523px" width="26" height="13" viewBox="1033 523 26 13"><path d="M1045.9 524 L1057.3 535 L1034.6 535Z" fill="#000"/></svg>
<span class="t" style="left:89.5px;top:53.5px;font-size:20px;line-height:24px;transform:scaleX(1.016);color:#111;">Profile</span>
<span class="t" style="left:199.6px;top:53.5px;font-size:20px;line-height:24px;transform:scaleX(1.037);color:#111;">Network</span>
<span class="t" style="left:316.0px;top:53.5px;font-size:20px;line-height:24px;transform:scaleX(0.948);color:#111;">Advanced</span>
<span class="t" style="left:439.3px;top:53.5px;font-size:20px;line-height:24px;transform:scaleX(0.995);color:#111;">Statistics</span>
<span class="t" style="left:574.6px;top:53.5px;font-size:20px;line-height:24px;transform:scaleX(0.923);color:#111;">WMM</span>
<span class="t" style="left:700.8px;top:53.5px;font-size:20px;line-height:24px;transform:scaleX(0.812);color:#111;">WPS</span>
<span class="t" style="left:778.9px;top:53.5px;font-size:20px;line-height:24px;transform:scaleX(1.037);color:#111;">Radio On/Off</span>
<span class="t" style="left:932.2px;top:53.5px;font-size:20px;line-height:24px;transform:scaleX(1.022);color:#111;">About</span>
<span class="t" style="left:489.1px;top:88.6px;font-size:14px;line-height:17px;transform:scaleX(0.981);">WPS AP List</span>
<span class="t" style="left:395.5px;top:255.1px;font-size:14px;line-height:17px;transform:scaleX(1.033);">WPS Profile List</span>
<span class="t" style="left:83.1px;top:130.1px;font-size:14px;line-height:17px;transform:scaleX(1.035);">ID :</span>
<span class="t" style="left:83.1px;top:163.1px;font-size:14px;line-height:17px;transform:scaleX(1.035);">ID :</span>
<span class="t" style="left:83.1px;top:196.1px;font-size:14px;line-height:17px;transform:scaleX(1.035);">ID :</span>
<span class="t" style="left:83.1px;top:229.1px;font-size:14px;line-height:17px;transform:scaleX(1.035);">ID :</span>
<span class="t" style="left:282.6px;top:132.7px;font-size:15px;line-height:18px;transform:scaleX(1.074);">Billion_AP</span>
<span class="t" style="left:281.6px;top:162.1px;font-size:14px;line-height:17px;transform:scaleX(1.058);">wlan-ap</span>
<span class="t" style="left:281.6px;top:195.8px;font-size:14px;line-height:17px;transform:scaleX(1.007);">Welcome to RFINICS</span>
<span class="t" style="left:281.6px;top:228.9px;font-size:14px;line-height:17px;transform:scaleX(1.055);">Mai-Lang</span>
<span class="t" style="left:548.6px;top:129.8px;font-size:14px;line-height:17px;transform:scaleX(1.062);">00 04 ED 85 46 92</span>
<span class="t" style="left:548.6px;top:162.2px;font-size:14px;line-height:17px;transform:scaleX(1.008);">00-21-85-BE-3B-2B</span>
<span class="t" style="left:548.6px;top:195.6px;font-size:14px;line-height:17px;transform:scaleX(1.021);">00-21-27-6A-2B-7E</span>
<span class="t" style="left:548.6px;top:229.0px;font-size:14px;line-height:17px;transform:scaleX(1.021);">00-21-91-EE-2A-68</span>
<span class="t" style="left:748.6px;top:129.8px;font-size:14px;line-height:17px;">1</span>
<span class="t" style="left:748.6px;top:162.2px;font-size:14px;line-height:17px;">1</span>
<span class="t" style="left:748.6px;top:195.6px;font-size:14px;line-height:17px;">8</span>
<span class="t" style="left:748.6px;top:229.0px;font-size:14px;line-height:17px;">9</span>
<span class="t" style="left:907.6px;top:126.6px;font-size:14px;line-height:17px;transform:scaleY(.86);transform-origin:0 80%;">Rescan</span>
<span class="t" style="left:892.6px;top:159.5px;font-size:15px;line-height:18px;transform:scaleX(1.054);">Information</span>
<span class="t" style="left:902.3px;top:188.1px;font-size:14px;line-height:17px;transform:scaleX(1.007);">Pin Code</span>
<span class="t" style="left:875.2px;top:218.9px;font-size:14px;line-height:17px;transform:scaleX(1.048);">04640776</span>
<span class="t" style="left:947.3px;top:219.9px;font-size:14px;line-height:17px;transform:scaleX(1.014);">Renew</span>
<span class="t" style="left:876.6px;top:254.5px;font-size:14px;line-height:17px;transform:scaleX(1.040);">Config Mode</span>
<span class="t" style="left:876.6px;top:286.8px;font-size:14px;line-height:17px;transform:scaleX(1.037);">Enrollee</span>
<span class="t" style="left:911.3px;top:327.3px;font-size:14px;line-height:17px;transform:scaleX(1.140);color:#aca899;text-shadow:1px 1px 0 #fff;">Detail</span>
<span class="t" style="left:903.6px;top:360.3px;font-size:14px;line-height:17px;transform:scaleX(1.105);color:#aca899;text-shadow:1px 1px 0 #fff;">Connect</span>
<span class="t" style="left:908.8px;top:393.6px;font-size:14px;line-height:17px;transform:scaleX(1.140);color:#aca899;text-shadow:1px 1px 0 #fff;">Rotate</span>
<span class="t" style="left:893.9px;top:426.6px;font-size:14px;line-height:17px;transform:scaleX(1.099);">Disconnect</span>
<span class="t" style="left:884.4px;top:460.2px;font-size:14px;line-height:17px;transform:scaleX(1.122);color:#aca899;text-shadow:1px 1px 0 #fff;">Export Profile</span>
<span class="t" style="left:910.4px;top:493.2px;font-size:14px;line-height:17px;transform:scaleX(1.083);color:#aca899;text-shadow:1px 1px 0 #fff;">Delete</span>
<span class="t" style="left:110.6px;top:467.1px;font-size:14px;line-height:17px;transform:scaleX(1.144);"><u>P</u>IN</span>
<span class="t" style="left:110.6px;top:507.1px;font-size:14px;line-height:17px;transform:scaleX(0.915);">P<u>B</u>C</span>
<span class="t" style="left:238.2px;top:466.1px;font-size:14px;line-height:17px;transform:scaleX(1.011);">WPS Associate IE</span>
<span class="t" style="left:238.2px;top:505.9px;font-size:14px;line-height:17px;transform:scaleX(0.985);">WPS Probe IE</span>
<span class="t" style="left:580.6px;top:467.1px;font-size:14px;line-height:17px;transform:scaleX(1.054);">Progress <span class="g">&gt;&gt;</span> 0%</span>
<span class="t" style="left:405.3px;top:506.8px;font-size:14px;line-height:17px;transform:scaleX(1.016);">PIN - WPS Eap process failed</span>
<span class="t" style="left:95.0px;top:552.4px;font-size:14px;line-height:17px;transform:scaleX(1.109);">Status <span class="g">&gt;&gt;</span></span>
<span class="t" style="left:69.0px;top:580.5px;font-size:14px;line-height:17px;transform:scaleX(1.156);">Extra Info <span class="g">&gt;&gt;</span></span>
<span class="t" style="left:85.4px;top:608.6px;font-size:14px;line-height:17px;transform:scaleX(1.048);">Channel <span class="g">&gt;&gt;</span></span>
<span class="t" style="left:37.5px;top:636.7px;font-size:14px;line-height:17px;transform:scaleX(1.139);">Authentication <span class="g">&gt;&gt;</span></span>
<span class="t" style="left:63.6px;top:664.8px;font-size:14px;line-height:17px;transform:scaleX(1.134);">Encryption <span class="g">&gt;&gt;</span></span>
<span class="t" style="left:43.6px;top:692.9px;font-size:14px;line-height:17px;transform:scaleX(1.117);">Network Type <span class="g">&gt;&gt;</span></span>
<span class="t" style="left:68.6px;top:721.0px;font-size:14px;line-height:17px;transform:scaleX(1.057);">IP Address <span class="g">&gt;&gt;</span></span>
<span class="t" style="left:77.1px;top:749.1px;font-size:14px;line-height:17px;transform:scaleX(1.019);">Sub Mask <span class="g">&gt;&gt;</span></span>
<span class="t" style="left:26.6px;top:777.2px;font-size:14px;line-height:17px;transform:scaleX(1.090);">Default Gateway <span class="g">&gt;&gt;</span></span>
<span class="t" style="left:225.4px;top:803.7px;font-size:14px;line-height:17px;transform:scaleX(0.984);">HT</span>
<span class="t" style="left:36.2px;top:843.3px;font-size:14px;line-height:17px;transform:scaleX(1.153);">BW <span class="g">&gt;&gt;</span> n/a</span>
<span class="t" style="left:43.0px;top:871.3px;font-size:14px;line-height:17px;transform:scaleX(1.192);">GI <span class="g">&gt;&gt;</span> n/a</span>
<span class="t" style="left:177.7px;top:871.3px;font-size:14px;line-height:17px;transform:scaleX(1.090);">MCS <span class="g">&gt;&gt;</span> n/a</span>
<span class="t" style="left:318.6px;top:843.3px;font-size:14px;line-height:17px;transform:scaleX(1.082);">SNR0 <span class="g">&gt;&gt;</span> n/a</span>
<span class="t" style="left:318.6px;top:871.3px;font-size:14px;line-height:17px;transform:scaleX(1.082);">SNR1 <span class="g">&gt;&gt;</span> n/a</span>
<span class="t" style="left:721.5px;top:556.3px;font-size:16px;line-height:19px;transform:scaleX(1.018);color:#35153d;">Link Quality&gt;&gt;0%</span>
<span class="t" style="left:711.2px;top:584.2px;font-size:16px;line-height:19px;transform:scaleX(1.026);color:#35153d;">Signal Strength1&gt;&gt;0%</span>
<span class="t" style="left:713.6px;top:611.8px;font-size:16px;line-height:19px;transform:scaleX(1.027);color:#35153d;">Signal Strength2&gt;&gt;0%</span>
<span class="t" style="left:715.3px;top:639.7px;font-size:16px;line-height:19px;transform:scaleX(1.027);color:#35153d;">Noise Strength&gt;&gt;0%</span>
<span class="t" style="left:598.1px;top:699.7px;font-size:14px;line-height:17px;transform:scaleX(1.097);">Transmit</span>
<span class="t" style="left:628.1px;top:725.6px;font-size:14px;line-height:17px;transform:scaleX(1.031);">Link Speed <span class="g">&gt;&gt;</span></span>
<span class="t" style="left:620.6px;top:753.1px;font-size:14px;line-height:17px;transform:scaleX(1.098);">Throughput <span class="g">&gt;&gt;</span></span>
<span class="t" style="left:598.1px;top:812.8px;font-size:14px;line-height:17px;transform:scaleX(1.049);">Receive</span>
<span class="t" style="left:628.1px;top:838.7px;font-size:14px;line-height:17px;transform:scaleX(1.031);">Link Speed <span class="g">&gt;&gt;</span></span>
<span class="t" style="left:620.6px;top:867.1px;font-size:14px;line-height:17px;transform:scaleX(1.098);">Throughput <span class="g">&gt;&gt;</span></span>
<span class="t" style="left:871.5px;top:719.8px;font-size:14px;line-height:17px;transform:scaleX(1.046);color:#e6e6e6;">Max</span>
<span class="t" style="left:866.3px;top:764.9px;font-size:14px;line-height:17px;transform:scaleX(1.082);color:#e6e6e6;">2.736</span>
<span class="t" style="left:869.0px;top:786.3px;font-size:14px;line-height:17px;transform:scaleX(0.976);color:#e6e6e6;">Kbps</span>
<span class="t" style="left:871.5px;top:832.8px;font-size:14px;line-height:17px;transform:scaleX(1.046);color:#e6e6e6;">Max</span>
<span class="t" style="left:862.2px;top:879.6px;font-size:14px;line-height:17px;transform:scaleX(1.074);color:#e6e6e6;">60.120</span>
<span class="t" style="left:869.0px;top:901.0px;font-size:14px;line-height:17px;transform:scaleX(0.976);color:#e6e6e6;">Kbps</span>
</div></body></html>
